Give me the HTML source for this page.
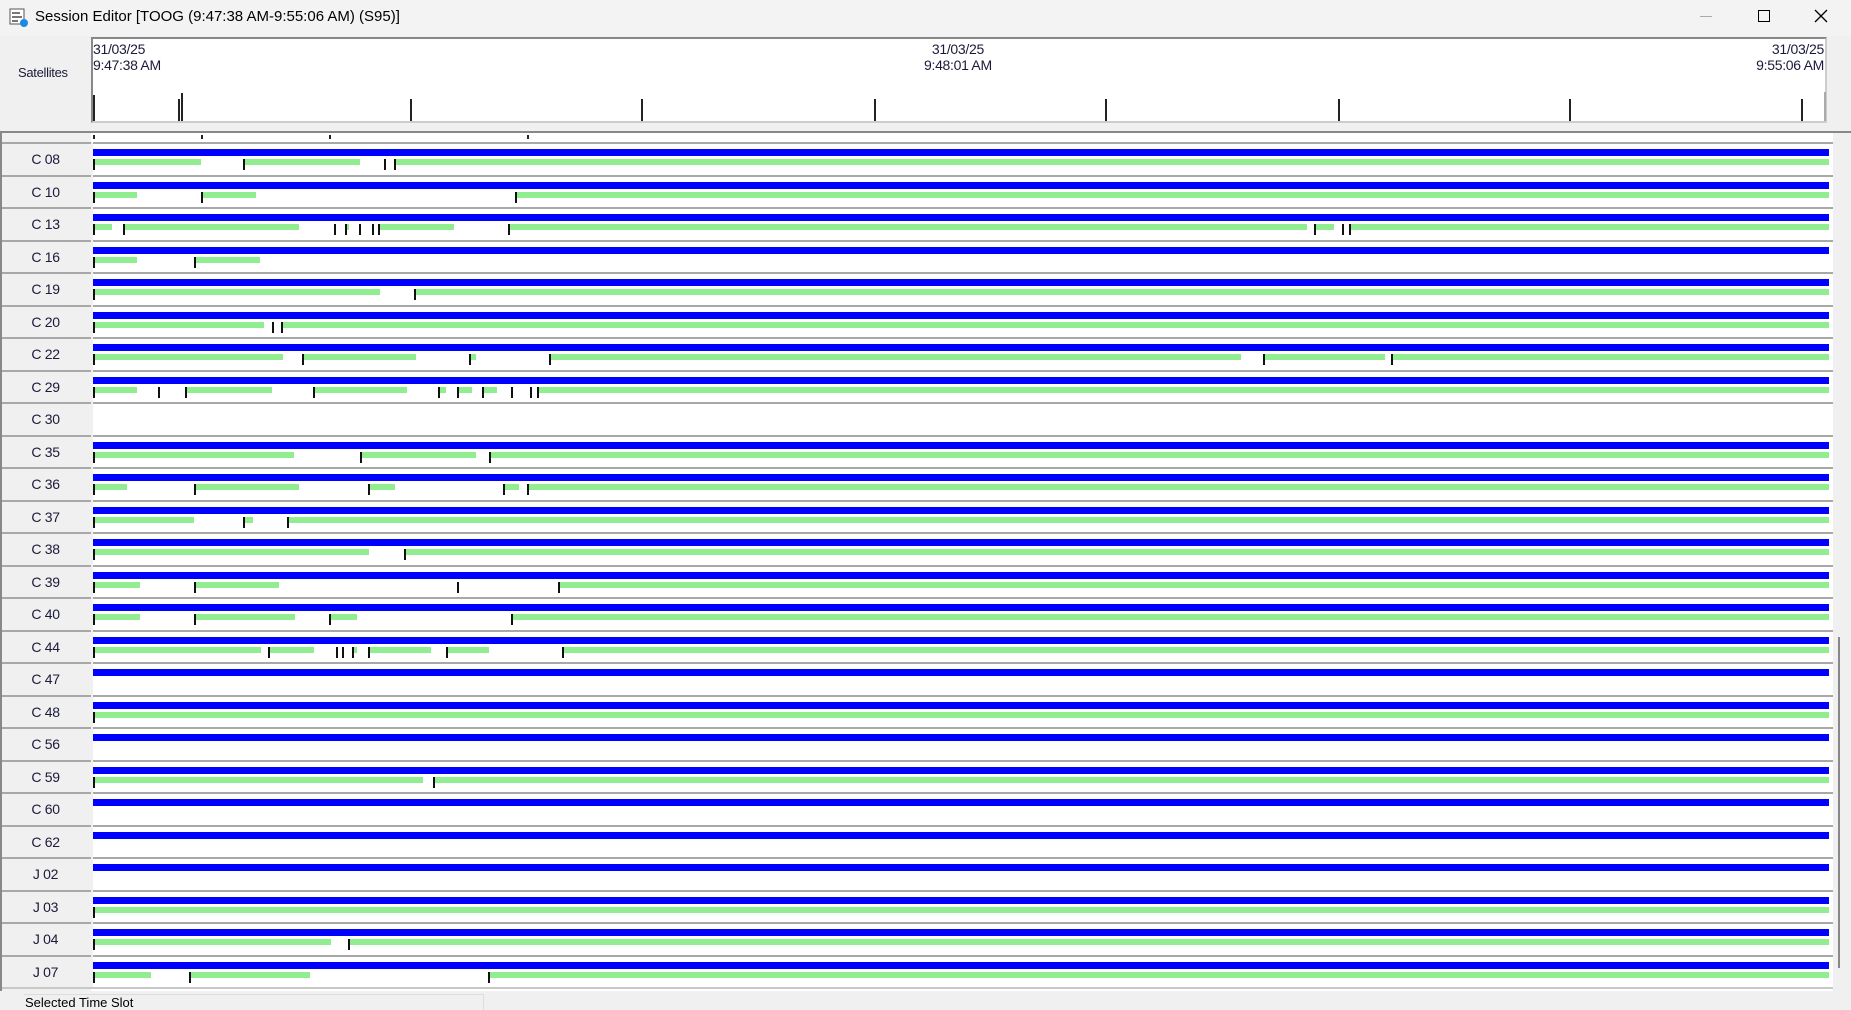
<!DOCTYPE html>
<html><head><meta charset="utf-8"><style>
*{margin:0;padding:0;box-sizing:border-box}
body{width:1851px;height:1010px;background:#f0f0f0;font-family:"Liberation Sans",sans-serif;position:relative;overflow:hidden}
.a{position:absolute}
.t{font-size:14px;color:#1a1a3a;letter-spacing:-0.3px}
</style></head><body>
<div class="a" style="left:0;top:0;width:1851px;height:36px;background:#f3f3f3"></div>
<svg class="a" style="left:9px;top:8px" width="20" height="20" viewBox="0 0 20 20"><rect x="1" y="1" width="14" height="15" fill="#fff" stroke="#555"/><rect x="3" y="4" width="8" height="2" fill="#777"/><rect x="3" y="8" width="10" height="2" fill="#777"/><rect x="3" y="12" width="6" height="2" fill="#777"/><circle cx="15" cy="15" r="4" fill="#1e88e5"/></svg>
<div class="a" style="left:35px;top:8px;font-size:15px;color:#000">Session Editor [TOOG (9:47:38 AM-9:55:06 AM) (S95)]</div>
<div class="a" style="left:1700px;top:16px;width:12px;height:1px;background:#aaa"></div>
<div class="a" style="left:1758px;top:10px;width:12px;height:12px;border:1.5px solid #000"></div>
<svg class="a" style="left:1814px;top:9px" width="14" height="14" viewBox="0 0 14 14"><path d="M1 1L13 13M13 1L1 13" stroke="#000" stroke-width="1.3"/></svg>
<div class="a t" style="left:18px;top:65px;font-size:13px">Satellites</div>
<div class="a" style="left:91px;top:37px;width:1736px;height:86px;background:#fff;border-top:2px solid #888;border-left:2px solid #888;border-bottom:2px solid #ccc;border-right:2px solid #ccc"></div>
<div class="a t" style="left:93px;top:41px;line-height:16px">31/03/25<br>9:47:38 AM</div>
<div class="a t" style="left:924px;top:41px;line-height:16px;text-align:center">31/03/25<br>9:48:01 AM</div>
<div class="a t" style="left:1724px;top:41px;line-height:16px;text-align:right;width:100px">31/03/25<br>9:55:06 AM</div>
<div class="a" style="left:0;top:131px;width:1851px;height:2px;background:#888"></div>
<div class="a" style="left:0;top:133px;width:1833px;height:858px;background:#fff"></div>
<div class="a" style="left:0;top:133px;width:91px;height:858px;background:#f0f0f0;border-left:2px solid #888"></div>
<div class="a" style="left:1838px;top:637px;width:2px;height:331px;background:#888"></div>
<div class="a" style="left:24px;top:994px;width:460px;height:16px;border:1px solid #ddd;border-bottom:none"></div>
<div class="a" style="left:22px;top:995px;font-size:13px;color:#000;background:#f0f0f0;padding:0 3px">Selected Time Slot</div>
<div id="c"></div>
<script>
const S=1.1805,c=document.getElementById('c');let h='';
function X(x){return Math.round(x*S)}
function r(l,t,w,hh,col){h+=`<div class="a" style="left:${l}px;top:${t}px;width:${w}px;height:${hh}px;background:${col}"></div>`}
[[79,95],[151,99],[153,93],[347,99],[543,99],[740,99],[936,99],[1133,99],[1329,99],[1526,99]].forEach(([x,y])=>r(X(x),y,2,121-y,'#222'));
r(X(1545),92,2,29,'#aaa');
[79,170,279,446].forEach(x=>r(X(x),135,2,4,'#222'));
const D=[
['C 08',1,[[79,170],[206,305],[325,327],[334,1549]],[79,206,325,334]],
['C 10',1,[[79,116],[170,217],[436,1549]],[79,170,436]],
['C 13',1,[[79,95],[104,253],[292,296],[322,385],[430,1107],[1113,1130],[1143,1549]],[79,104,283,292,304,315,320,430,1113,1137,1143]],
['C 16',1,[[79,116],[164,220]],[79,164]],
['C 19',1,[[79,322],[351,1549]],[79,351]],
['C 20',1,[[79,224],[238,1549]],[79,230,238]],
['C 22',1,[[79,240],[256,352],[397,403],[465,1051],[1070,1173],[1178,1549]],[79,256,397,465,1070,1178]],
['C 29',1,[[79,116],[157,230],[265,345],[371,378],[387,400],[408,421],[455,1549]],[79,134,157,265,371,387,408,433,449,455]],
['C 30',0,[],[]],
['C 35',1,[[79,249],[305,403],[414,1549]],[79,305,414]],
['C 36',1,[[79,108],[164,253],[312,335],[426,440],[446,1549]],[79,164,312,426,446]],
['C 37',1,[[79,164],[206,214],[243,1549]],[79,206,243]],
['C 38',1,[[79,313],[342,1549]],[79,342]],
['C 39',1,[[79,119],[164,236],[387,389],[473,1549]],[79,164,387,473]],
['C 40',1,[[79,119],[164,250],[279,302],[433,1549]],[79,164,279,433]],
['C 44',1,[[79,221],[227,266],[298,302],[312,365],[378,414],[476,1549]],[79,227,285,290,298,312,378,476]],
['C 47',1,[],[]],
['C 48',1,[[79,1549]],[79]],
['C 56',1,[],[]],
['C 59',1,[[79,358],[367,1549]],[79,367]],
['C 60',1,[],[]],
['C 62',1,[],[]],
['J 02',1,[],[]],
['J 03',1,[[79,1549]],[79]],
['J 04',1,[[79,280],[295,1549]],[79,295]],
['J 07',1,[[79,128],[160,263],[413,1549]],[79,160,413]]];
D.forEach((d,i)=>{const y=Math.round(142+i*32.5);
r(2,y,1831,2,'#a8a8a8');r(91,y,2,33,'#f0f0f0');
h+=`<div class="a t" style="left:0;width:91px;text-align:center;top:${y+9}px">${d[0]}</div>`;
if(d[1])r(93,y+7,1736,7,'#0000ff');
d[2].forEach(([a,b])=>r(X(a),y+17,X(b)-X(a),6,'#90ee90'));
d[3].forEach(x=>r(X(x),y+17,2,11,'#111'));});
r(2,Math.round(142+26*32.5),1831,2,'#c8c8c8');
c.innerHTML=h;
</script>
</body></html>
